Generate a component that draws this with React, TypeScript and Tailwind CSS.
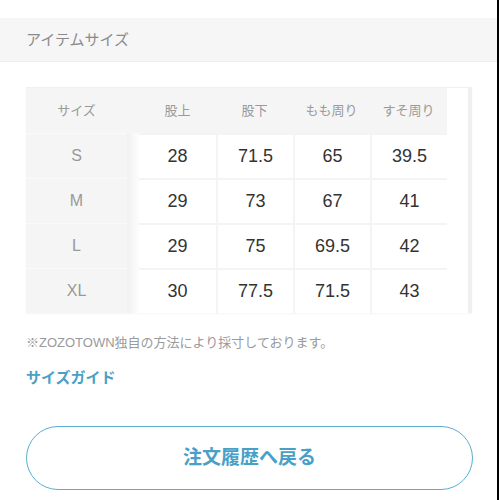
import React from "react";

const font = { fontFamily: '"Liberation Sans", "Noto Sans CJK JP", "Noto Sans", sans-serif' };

const rows = [
  ["S", "28", "71.5", "65", "39.5"],
  ["M", "29", "73", "67", "41"],
  ["L", "29", "75", "69.5", "42"],
  ["XL", "30", "77.5", "71.5", "43"],
];
const heads = ["股上", "股下", "もも周り", "すそ周り"];

export default function App() {
  return (
    <div className="flex w-[500px] h-[500px] bg-white overflow-hidden" style={font}>
      <div className="w-[497px] flex flex-col">
        <div className="h-[18px]" />
        <div className="h-[44px] bg-[#f6f6f6] border-b border-[#ececec] flex items-center pl-[26px]">
          <span className="text-[15px] text-[#8a8a8a] leading-none">アイテムサイズ</span>
        </div>
        <div className="pl-[26px] pr-[25px] pt-[25px]">
          <div className="w-[446px] bg-white border-t border-[#f0f0f0] border-r-4 border-r-[#f0f0f0] shadow-[0_1px_2px_rgba(0,0,0,0.04)]">
            <div className="flex h-[45px] w-[421px] bg-[#f5f5f5] items-center">
              <div className="w-[101px] text-center text-[13px] text-[#9a9a9a]">サイズ</div>
              <div className="w-[12px]" />
              {heads.map((h) => (
                <div key={h} className="w-[77px] text-center text-[13px] text-[#9a9a9a]">
                  {h}
                </div>
              ))}
            </div>
            {rows.map((r) => (
              <div key={r[0]} className="flex h-[45px] w-[421px]">
                <div className="w-[101px] bg-[#f5f5f5] border-t border-[#fafafa] flex items-center justify-center text-[16px] text-[#999]">
                  {r[0]}
                </div>
                <div className="w-[12px] bg-gradient-to-r from-[#f1f1f1] to-[#fdfdfd]" />
                {r.slice(1).map((v, i) => (
                  <div
                    key={i}
                    className={`w-[77px] bg-white border-t-2 border-[#f4f4f4] flex items-center justify-center text-[18px] text-[#333] ${i > 0 ? "border-l-2" : ""}`}
                  >
                    {v}
                  </div>
                ))}
              </div>
            ))}
          </div>
          <div className="mt-[21px] text-[13px] leading-[18px] text-[#9a9a9a]">
            ※ZOZOTOWN独自の方法により採寸しております。
          </div>
          <div className="mt-[15px] text-[15px] leading-[22px] font-bold text-[#4a9fc6]">
            サイズガイド
          </div>
          <div className="mt-[37px] w-[447px] h-[64px] rounded-full border-[1.5px] border-[#5aaecf] flex items-center justify-center">
            <span className="text-[19px] font-bold text-[#4a9fc6]">注文履歴へ戻る</span>
          </div>
        </div>
      </div>
      <div className="w-[2px] h-full bg-black" />
      <div className="w-[1px] h-full bg-white" />
    </div>
  );
}
